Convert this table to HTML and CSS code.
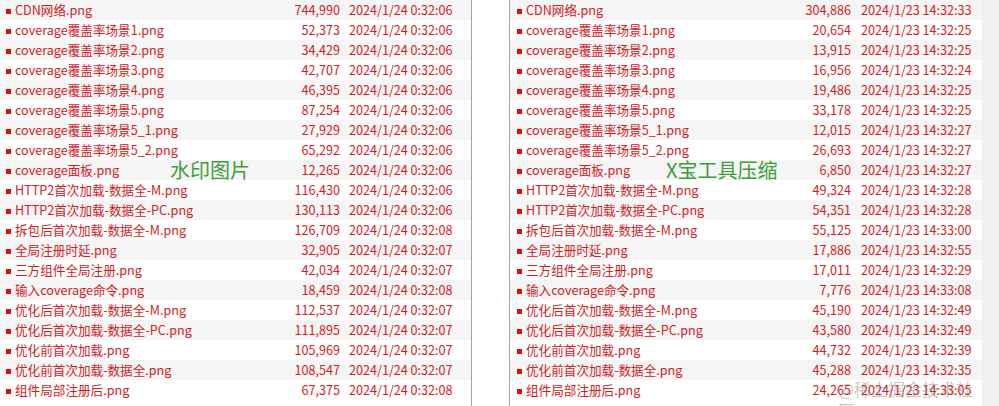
FILE: index.html
```html
<!DOCTYPE html>
<html lang="zh-CN">
<head>
<meta charset="utf-8">
<title>文件列表对比</title>
<link rel="stylesheet" href="styles.css">
</head>
<body>
<div class="screen">
  <div class="panel panel-left">
    <div class="row"><i class="dot"></i><span class="name">CDN网络.png</span><span class="size">744,990</span><span class="date">2024/1/24 0:32:06</span></div>
    <div class="row"><i class="dot"></i><span class="name">coverage覆盖率场景1.png</span><span class="size">52,373</span><span class="date">2024/1/24 0:32:06</span></div>
    <div class="row"><i class="dot"></i><span class="name">coverage覆盖率场景2.png</span><span class="size">34,429</span><span class="date">2024/1/24 0:32:06</span></div>
    <div class="row"><i class="dot"></i><span class="name">coverage覆盖率场景3.png</span><span class="size">42,707</span><span class="date">2024/1/24 0:32:06</span></div>
    <div class="row"><i class="dot"></i><span class="name">coverage覆盖率场景4.png</span><span class="size">46,395</span><span class="date">2024/1/24 0:32:06</span></div>
    <div class="row"><i class="dot"></i><span class="name">coverage覆盖率场景5.png</span><span class="size">87,254</span><span class="date">2024/1/24 0:32:06</span></div>
    <div class="row"><i class="dot"></i><span class="name">coverage覆盖率场景5_1.png</span><span class="size">27,929</span><span class="date">2024/1/24 0:32:06</span></div>
    <div class="row"><i class="dot"></i><span class="name">coverage覆盖率场景5_2.png</span><span class="size">65,292</span><span class="date">2024/1/24 0:32:06</span></div>
    <div class="row"><i class="dot"></i><span class="name">coverage面板.png</span><span class="size">12,265</span><span class="date">2024/1/24 0:32:06</span></div>
    <div class="row"><i class="dot"></i><span class="name">HTTP2首次加载-数据全-M.png</span><span class="size">116,430</span><span class="date">2024/1/24 0:32:06</span></div>
    <div class="row"><i class="dot"></i><span class="name">HTTP2首次加载-数据全-PC.png</span><span class="size">130,113</span><span class="date">2024/1/24 0:32:06</span></div>
    <div class="row"><i class="dot"></i><span class="name">拆包后首次加载-数据全-M.png</span><span class="size">126,709</span><span class="date">2024/1/24 0:32:08</span></div>
    <div class="row"><i class="dot"></i><span class="name">全局注册时延.png</span><span class="size">32,905</span><span class="date">2024/1/24 0:32:07</span></div>
    <div class="row"><i class="dot"></i><span class="name">三方组件全局注册.png</span><span class="size">42,034</span><span class="date">2024/1/24 0:32:07</span></div>
    <div class="row"><i class="dot"></i><span class="name">输入coverage命令.png</span><span class="size">18,459</span><span class="date">2024/1/24 0:32:08</span></div>
    <div class="row"><i class="dot"></i><span class="name">优化后首次加载-数据全-M.png</span><span class="size">112,537</span><span class="date">2024/1/24 0:32:07</span></div>
    <div class="row"><i class="dot"></i><span class="name">优化后首次加载-数据全-PC.png</span><span class="size">111,895</span><span class="date">2024/1/24 0:32:07</span></div>
    <div class="row"><i class="dot"></i><span class="name">优化前首次加载.png</span><span class="size">105,969</span><span class="date">2024/1/24 0:32:07</span></div>
    <div class="row"><i class="dot"></i><span class="name">优化前首次加载-数据全.png</span><span class="size">108,547</span><span class="date">2024/1/24 0:32:07</span></div>
    <div class="row"><i class="dot"></i><span class="name">组件局部注册后.png</span><span class="size">67,375</span><span class="date">2024/1/24 0:32:08</span></div>
    <div class="label label-left">水印图片</div>
  </div>
  <div class="gutter"></div>
  <div class="panel panel-right">
    <div class="row"><i class="dot"></i><span class="name">CDN网络.png</span><span class="size">304,886</span><span class="date">2024/1/23 14:32:33</span></div>
    <div class="row"><i class="dot"></i><span class="name">coverage覆盖率场景1.png</span><span class="size">20,654</span><span class="date">2024/1/23 14:32:25</span></div>
    <div class="row"><i class="dot"></i><span class="name">coverage覆盖率场景2.png</span><span class="size">13,915</span><span class="date">2024/1/23 14:32:25</span></div>
    <div class="row"><i class="dot"></i><span class="name">coverage覆盖率场景3.png</span><span class="size">16,956</span><span class="date">2024/1/23 14:32:24</span></div>
    <div class="row"><i class="dot"></i><span class="name">coverage覆盖率场景4.png</span><span class="size">19,486</span><span class="date">2024/1/23 14:32:25</span></div>
    <div class="row"><i class="dot"></i><span class="name">coverage覆盖率场景5.png</span><span class="size">33,178</span><span class="date">2024/1/23 14:32:25</span></div>
    <div class="row"><i class="dot"></i><span class="name">coverage覆盖率场景5_1.png</span><span class="size">12,015</span><span class="date">2024/1/23 14:32:27</span></div>
    <div class="row"><i class="dot"></i><span class="name">coverage覆盖率场景5_2.png</span><span class="size">26,693</span><span class="date">2024/1/23 14:32:27</span></div>
    <div class="row"><i class="dot"></i><span class="name">coverage面板.png</span><span class="size">6,850</span><span class="date">2024/1/23 14:32:27</span></div>
    <div class="row"><i class="dot"></i><span class="name">HTTP2首次加载-数据全-M.png</span><span class="size">49,324</span><span class="date">2024/1/23 14:32:28</span></div>
    <div class="row"><i class="dot"></i><span class="name">HTTP2首次加载-数据全-PC.png</span><span class="size">54,351</span><span class="date">2024/1/23 14:32:28</span></div>
    <div class="row"><i class="dot"></i><span class="name">拆包后首次加载-数据全-M.png</span><span class="size">55,125</span><span class="date">2024/1/23 14:33:00</span></div>
    <div class="row"><i class="dot"></i><span class="name">全局注册时延.png</span><span class="size">17,886</span><span class="date">2024/1/23 14:32:55</span></div>
    <div class="row"><i class="dot"></i><span class="name">三方组件全局注册.png</span><span class="size">17,011</span><span class="date">2024/1/23 14:32:29</span></div>
    <div class="row"><i class="dot"></i><span class="name">输入coverage命令.png</span><span class="size">7,776</span><span class="date">2024/1/23 14:33:08</span></div>
    <div class="row"><i class="dot"></i><span class="name">优化后首次加载-数据全-M.png</span><span class="size">45,190</span><span class="date">2024/1/23 14:32:49</span></div>
    <div class="row"><i class="dot"></i><span class="name">优化后首次加载-数据全-PC.png</span><span class="size">43,580</span><span class="date">2024/1/23 14:32:49</span></div>
    <div class="row"><i class="dot"></i><span class="name">优化前首次加载.png</span><span class="size">44,732</span><span class="date">2024/1/23 14:32:39</span></div>
    <div class="row"><i class="dot"></i><span class="name">优化前首次加载-数据全.png</span><span class="size">45,288</span><span class="date">2024/1/23 14:32:35</span></div>
    <div class="row"><i class="dot"></i><span class="name">组件局部注册后.png</span><span class="size">24,265</span><span class="date">2024/1/23 14:33:05</span></div>
    <div class="label label-right">X宝工具压缩</div>
    <div class="watermark">@稀土掘金技术社区</div>
  </div>
  <div class="scrollbar"></div>
</div>
</body>
</html>
```

FILE: styles.css
```css
html, body {
  margin: 0;
  padding: 0;
  background: #ffffff;
}

body {
  font-family: "Noto Sans CJK SC", "Noto Sans", sans-serif;
  font-size: 12.6px;
  color: #d4201c;
}

.screen {
  display: flex;
  width: 999px;
  height: 406px;
  overflow: hidden;
}

.panel {
  position: relative;
  display: flex;
  flex-direction: column;
}

.panel-left {
  width: 471px;
  border-right: 1px solid #a3a3a3;
  --lead: 15px;
  --dot-left: 6px;
}

.gutter {
  width: 37px;
  background: #ffffff;
}

.panel-right {
  width: 472px;
  border-left: 1px solid #a3a3a3;
  --lead: 16px;
  --dot-left: 7px;
}

.scrollbar {
  width: 17px;
  background: #f0f0f0;
}

.row {
  display: grid;
  grid-template-columns: var(--lead) 245px 80px 1fr;
  align-items: center;
  height: 20px;
  line-height: 20px;
  white-space: nowrap;
}

.row:nth-child(odd) {
  background: #f5f5f5;
}

.dot {
  display: block;
  width: 5px;
  height: 5px;
  margin-left: var(--dot-left);
  margin-top: 3px;
  background: #dd0f0f;
}

.name {
  overflow: hidden;
}

.size {
  text-align: right;
}

.date {
  padding-left: 9px;
}

.panel-right .date {
  padding-left: 10px;
}

.label {
  position: absolute;
  top: 158px;
  font-size: 20px;
  line-height: 24px;
  color: #3d9e3d;
}

.label-left {
  left: 170px;
}

.label-right {
  left: 156px;
}

.watermark {
  position: absolute;
  left: 328px;
  top: 378px;
  font-size: 17px;
  line-height: 22px;
  color: rgba(110, 110, 110, 0.4);
}
```
